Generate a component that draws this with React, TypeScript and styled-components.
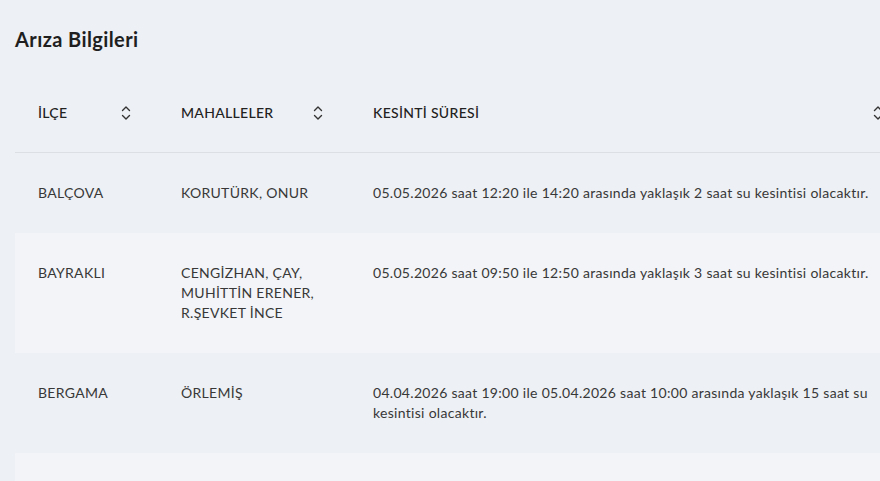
import React from "react";
import styled, { createGlobalStyle } from "styled-components";

const FONT = `"Lato", "Noto Sans", sans-serif`;

const Global = createGlobalStyle`
  html, body { margin: 0; padding: 0; background: #edf0f4; overflow: hidden; }
  body { font-family: ${FONT}; color: #333; }
`;

const Page = styled.div`
  padding: 26px 0 0 15px;
  width: 1120px;
`;

const Title = styled.h2`
  margin: 0 0 22px 0;
  font-size: 20px;
  line-height: 26px;
  font-weight: 700;
  letter-spacing: 0.4px;
  color: #1f1f1f;
`;

const Table = styled.div`
  display: grid;
  grid-template-columns: 143px 192px 560px 200px;
`;

const HeadCell = styled.div`
  display: flex;
  align-items: center;
  justify-content: space-between;
  padding: 29px 26px 29px 23px;
  font-size: 14px;
  line-height: 20px;
  font-weight: 500;
  letter-spacing: 0.3px;
  color: #222;
  border-bottom: 1px solid #dcdfe4;
`;

const Row = styled.div<{ $alt?: boolean }>`
  display: contents;
  & > div { background: ${(p) => (p.$alt ? "#f2f4f7" : "transparent")}; }
`;

const Cell = styled.div`
  padding: 30px 23px;
  font-size: 14px;
  line-height: 20px;
  letter-spacing: 0.3px;
  color: #383838;
`;

const SortIcon = () => (
  <svg width="12" height="16" viewBox="0 0 12 16" fill="none" stroke="#333" strokeWidth="1.4" strokeLinecap="round" strokeLinejoin="round">
    <path d="M2.5 5.5 6 2l3.5 3.5" />
    <path d="M2.5 10.5 6 14l3.5-3.5" />
  </svg>
);

const rows = [
  { ilce: "BALÇOVA", mah: ["KORUTÜRK, ONUR"], sure: "05.05.2026 saat 12:20 ile 14:20 arasında yaklaşık 2 saat su kesintisi olacaktır." },
  { ilce: "BAYRAKLI", mah: ["CENGİZHAN, ÇAY,", "MUHİTTİN ERENER,", "R.ŞEVKET İNCE"], sure: "05.05.2026 saat 09:50 ile 12:50 arasında yaklaşık 3 saat su kesintisi olacaktır." },
  { ilce: "BERGAMA", mah: ["ÖRLEMİŞ"], sure: "04.04.2026 saat 19:00 ile 05.04.2026 saat 10:00 arasında yaklaşık 15 saat su kesintisi olacaktır." },
  { ilce: "BORNOVA", mah: ["ÇAMKULE"], sure: "05.05.2026 saat 10:00 ile 16:00 arasında yaklaşık 6 saat su kesintisi olacaktır." },
];

export default function App() {
  return (
    <>
      <Global />
      <Page>
        <Title>Arıza Bilgileri</Title>
        <Table>
          <HeadCell>İLÇE<SortIcon /></HeadCell>
          <HeadCell>MAHALLELER<SortIcon /></HeadCell>
          <HeadCell>KESİNTİ SÜRESİ<SortIcon /></HeadCell>
          <HeadCell>&nbsp;</HeadCell>
          {rows.map((r, i) => (
            <Row key={r.ilce} $alt={i % 2 === 1}>
              <Cell>{r.ilce}</Cell>
              <Cell>{r.mah.map((m) => <div key={m}>{m}</div>)}</Cell>
              <Cell>{r.sure}</Cell>
              <Cell />
            </Row>
          ))}
        </Table>
      </Page>
    </>
  );
}
